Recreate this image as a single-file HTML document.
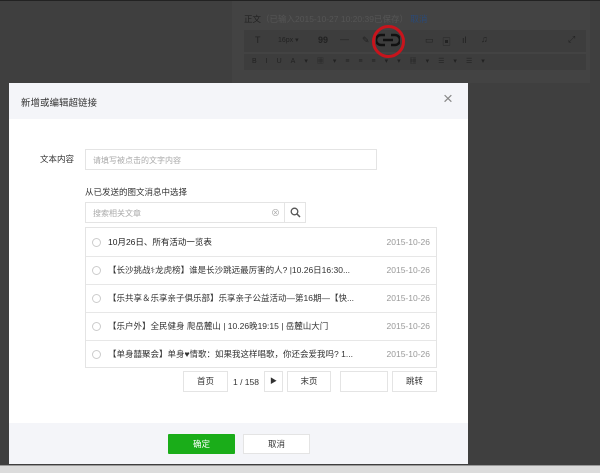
<!DOCTYPE html><html><head><meta charset="utf-8"><style>
body{margin:0;width:600px;height:473px;background:#3f3f3f;position:relative;overflow:hidden;font-family:"Liberation Sans","Noto Sans CJK SC",sans-serif;}
.a{position:absolute}
.t{font-size:8px;color:#222}
.box{position:absolute;border:1px solid #e4e4e4;background:#fff;box-sizing:border-box}
.row{position:absolute;left:0;right:0;height:28px;border-bottom:1px solid #e7e7e7;font-size:8.5px;color:#333;line-height:28px}
.row i{position:absolute;left:6px;top:10px;width:7px;height:7px;border:1px solid #ccc;border-radius:50%}
.row span{position:absolute;left:22px}
.row b{font-weight:normal;position:absolute;right:6px;color:#999}
.btn{position:absolute;border:1px solid #e4e4e4;background:#fff;box-sizing:border-box;font-size:8.5px;color:#333;text-align:center;line-height:19px}
.tb{position:absolute;color:#222;font-size:9px}
</style></head><body>
<div class="a" style="left:232px;top:0;width:358px;height:83px;background:#434343"></div>
<div class="a" style="left:0;top:0;width:600px;height:1px;background:#222"></div>
<div class="a t" style="left:244px;top:13px;color:#222;font-size:8.5px">正文<span style="color:#555">（已输入2015-10-27 10:20:39已保存）</span> <span style="color:#2a4a78">取消</span></div>
<div class="a" style="left:244px;top:30px;width:342px;height:22px;background:#3d3d3d"></div>
<div class="a" style="left:244px;top:54px;width:342px;height:16px;background:#3d3d3d"></div>
<div class="tb" style="left:255px;top:35px">T</div>
<div class="tb" style="left:278px;top:36px;font-size:7px">16px ▾</div>
<div class="tb" style="left:318px;top:35px;font-weight:bold">99</div>
<div class="tb" style="left:340px;top:34px">—</div>
<div class="tb" style="left:362px;top:35px">✎</div>
<svg class="a" style="left:376px;top:33px" width="24" height="14" viewBox="0 0 24 14"><path d="M9 2H5a5 5 0 0 0 0 10h4M15 2h4a5 5 0 0 1 0 10h-4M7 7h10" fill="none" stroke="#111" stroke-width="2.5"/></svg>
<div class="a" style="left:372px;top:25px;width:27px;height:27px;border:3px solid #c8141c;border-radius:50%"></div>
<div class="tb" style="left:425px;top:35px">▭</div><div class="tb" style="left:442px;top:35px">▣</div><div class="tb" style="left:462px;top:35px">ıl</div><div class="tb" style="left:481px;top:34px">♫</div><div class="tb" style="left:568px;top:34px">⤢</div>
<div class="tb" style="left:252px;top:56px;font-size:7px;letter-spacing:9px">BIUA▾▦▾≡≡≡▾▾▦▾☰▾☰▾</div>
<div class="a" style="left:9px;top:83px;width:459px;height:381px;background:#fff">
 <div class="a" style="left:0;top:0;right:0;height:36px;background:#f4f5f9"></div>
 <div class="a" style="left:12px;top:12px;font-size:9.5px;color:#333">新增或编辑超链接</div>
 <div class="a" style="left:434px;top:6px;font-size:17px;color:#888">×</div>
 <div class="a" style="left:31px;top:70px;font-size:8.5px;color:#333">文本内容</div>
 <div class="box" style="left:76px;top:66px;width:292px;height:21px"><span class="a" style="left:7px;top:5px;font-size:8px;color:#aaa">请填写被点击的文字内容</span></div>
 <div class="a" style="left:76px;top:103px;font-size:8.5px;color:#333">从已发送的图文消息中选择</div>
 <div class="box" style="left:76px;top:119px;width:200px;height:21px"><span class="a" style="left:7px;top:5px;font-size:8px;color:#aaa">搜索相关文章</span><span class="a" style="left:185px;top:3px;font-size:9px;color:#aaa">⊗</span></div>
 <div class="box" style="left:275px;top:119px;width:22px;height:21px"><svg class="a" style="left:5px;top:4px" width="11" height="11" viewBox="0 0 11 11"><circle cx="4.5" cy="4.5" r="3.3" fill="none" stroke="#555" stroke-width="1.3"/><path d="M7 7l3 3" stroke="#555" stroke-width="1.5"/></svg></div>
 <div class="box" style="left:76px;top:144px;width:352px;height:141px">
  <div class="row" style="top:0"><i></i><span style="left:22px;color:#222">10月26日、所有活动一览表</span><b>2015-10-26</b></div>
  <div class="row" style="top:28px"><i></i><span>【长沙挑战&#9877;龙虎榜】谁是长沙跳远最厉害的人? |10.26日16:30...</span><b>2015-10-26</b></div>
  <div class="row" style="top:56px"><i></i><span>【乐共享＆乐享亲子俱乐部】乐享亲子公益活动—第16期—【快...</span><b>2015-10-26</b></div>
  <div class="row" style="top:84px"><i></i><span>【乐户外】全民健身 爬岳麓山 | 10.26晚19:15 | 岳麓山大门</span><b>2015-10-26</b></div>
  <div class="row" style="top:112px;border:none"><i></i><span>【单身囍聚会】单身♥情歌：如果我这样唱歌，你还会爱我吗? 1...</span><b>2015-10-26</b></div>
 </div>
 <div class="btn" style="left:174px;top:288px;width:45px;height:21px">首页</div>
 <div class="a" style="left:224px;top:294px;font-size:8.5px;color:#333">1 / 158</div>
 <div class="btn" style="left:255px;top:288px;width:19px;height:21px;font-size:7px">▶</div>
 <div class="btn" style="left:278px;top:288px;width:44px;height:21px">末页</div>
 <div class="btn" style="left:331px;top:288px;width:48px;height:21px"></div>
 <div class="btn" style="left:383px;top:288px;width:45px;height:21px">跳转</div>
 <div class="a" style="left:0;top:340px;right:0;height:41px;background:#f4f5f9"></div>
 <div class="a" style="left:159px;top:351px;width:67px;height:20px;background:#1aad19;color:#fff;font-size:8.5px;text-align:center;line-height:20px;border-radius:1px">确定</div>
 <div class="btn" style="left:234px;top:351px;width:67px;height:20px;line-height:18px">取消</div>
</div>
<div class="a" style="left:0;top:465px;width:600px;height:8px;background:#dcdcdc"></div>
<div class="a" style="left:0;top:465px;width:600px;height:1px;background:#9a9a9a"></div>
</body></html>
